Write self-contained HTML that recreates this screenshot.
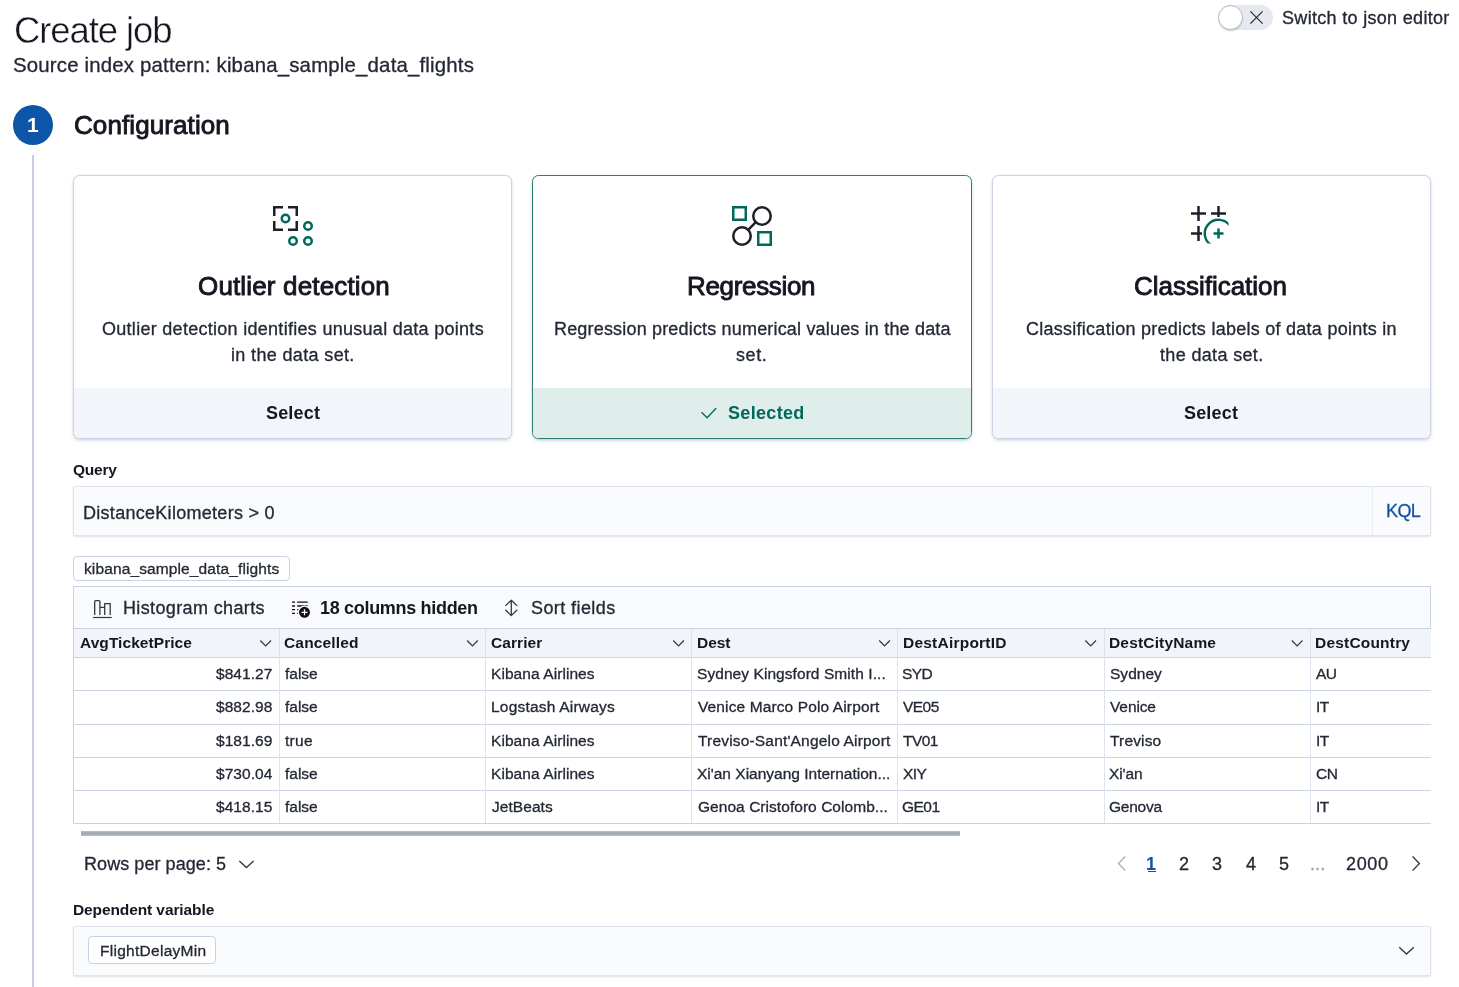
<!DOCTYPE html>
<html lang="en"><head><meta charset="utf-8"><title>Create job</title>
<style>
html,body{margin:0;padding:0;background:#fff;}
body{width:1459px;height:987px;overflow:hidden;position:relative;font-family:"Liberation Sans", sans-serif;}
.t{position:absolute;white-space:nowrap;line-height:1;display:block;will-change:transform;}
.b{position:absolute;box-sizing:border-box;}
svg{position:absolute;overflow:visible;}
</style></head><body>
<!-- toggle -->
<div class="b" style="left:1218px;top:5px;width:55px;height:25px;border-radius:12.5px;background:#e7e9f0;"></div>
<div class="b" style="left:1217.5px;top:4.7px;width:25px;height:25px;border-radius:50%;background:#fff;border:1px solid #b2b7c1;box-shadow:0 2px 2px -1px rgba(60,70,90,.25);"></div>
<svg style="left:1250px;top:10.7px" width="13" height="13" viewBox="0 0 13 13"><path d="M0.4 0.4L12.6 12.6M12.6 0.4L0.4 12.6" stroke="#2b303b" stroke-width="1.3" fill="none"/></svg>
<!-- step -->
<div class="b" style="left:13px;top:105px;width:40px;height:40px;border-radius:50%;background:#0c55a8;"></div>
<div class="b" style="left:31.6px;top:155px;width:2.6px;height:840px;background:#c6cce1;"></div>
<!-- cards -->
<div class="b card" style="left:73px;top:175px;width:439px;height:264px;"><div class="ft"></div></div>
<div class="b card sel" style="left:532px;top:175px;width:440px;height:264px;"><div class="ft"></div></div>
<div class="b card" style="left:992px;top:175px;width:439px;height:264px;"><div class="ft"></div></div>
<style>
.card{border:1px solid #cdd3e5;border-radius:6.5px;background:#fff;overflow:hidden;box-shadow:0 1px 3px rgba(100,110,150,.22),0 3px 5px -2px rgba(100,110,150,.18);}
.card .ft{position:absolute;left:0;right:0;top:212px;bottom:0;background:#f2f5fa;}
.card.sel{border:1.5px solid #2b7c72;box-shadow:0 1px 3px rgba(0,80,70,.18),0 3px 5px -2px rgba(0,80,70,.15);}
.card.sel .ft{background:#dfeeeb;top:211.7px;}
</style>
<!-- icons -->
<svg style="left:273px;top:206px" width="40" height="40" viewBox="0 0 32 32" fill="none" stroke-width="2">
<path d="M1 8V1H8M12 1H19V8M19 12V19H12M8 19H1V12" stroke="#1d2029"/>
<g stroke="#01695c"><circle cx="10" cy="10" r="3"/><circle cx="28" cy="16" r="3"/><circle cx="16" cy="28" r="3"/><circle cx="28" cy="28" r="3"/></g></svg>
<svg style="left:732px;top:206px" width="40" height="40" viewBox="0 0 32 32" fill="none" stroke-width="2">
<g stroke="#01695c"><rect x="1" y="1" width="10" height="10"/><rect x="21" y="21" width="10" height="10"/></g>
<g stroke="#1d2029"><circle cx="24" cy="8" r="7"/><circle cx="8" cy="24" r="7"/><path d="M19.05 12.95L12.95 19.05"/></g></svg>
<svg style="left:1191px;top:206px" width="40" height="40" viewBox="0 0 32 32" fill="none" stroke-width="2">
<defs><clipPath id="cc"><rect x="0" y="0" width="30" height="30"/></clipPath></defs>
<g stroke="#1d2029"><path d="M0 6H12M6 0V12M16 6H28M22 0V8.7M0 22H8.8M6 16V28"/></g>
<g stroke="#01695c"><path d="M18 22H26M22 18V26"/><path clip-path="url(#cc)" d="M16.5 31.53A11 11 0 1 1 31.53 16.5"/></g></svg>
<!-- selected check -->
<svg style="left:700px;top:406px" width="18" height="14" viewBox="0 0 18 14"><path d="M1.5 6.3L7.1 11.8L16.1 2.3" stroke="#00695c" stroke-width="1.35" fill="none"/></svg>
<!-- query -->
<div class="b" style="left:73px;top:486px;width:1358px;height:50px;background:#fafbfd;border:1px solid #e0e4ef;border-radius:2px;box-shadow:0 1px 2px rgba(150,160,190,.3);"></div>
<div class="b" style="left:1372px;top:487px;width:1px;height:48px;background:#e9ecf3;"></div>
<!-- index badge -->
<div class="b" style="left:73px;top:556px;width:217px;height:25px;background:#fff;border:1px solid #cad3e2;border-radius:4px;"></div>
<!-- datagrid -->
<div class="b" style="left:73px;top:586px;width:1358px;height:43px;background:#f9fafd;border:1px solid #cad3e2;"></div>
<div class="b" style="left:73px;top:628px;width:1358px;height:30px;background:#f1f4fa;border-top:1px solid #cad3e2;border-bottom:1px solid #cad3e2;"></div>
<div class="b" style="left:73px;top:628px;width:1px;height:196px;background:#cad3e2;"></div>
<div class="b hl" style="top:690px"></div><div class="b hl" style="top:724px"></div><div class="b hl" style="top:757px"></div><div class="b hl" style="top:790px"></div><div class="b hl" style="top:823px"></div>
<div class="b vl" style="left:279px"></div><div class="b vl" style="left:485px"></div><div class="b vl" style="left:691px"></div><div class="b vl" style="left:897px"></div><div class="b vl" style="left:1104px"></div><div class="b vl" style="left:1310px"></div>
<style>
.hl{left:73px;width:1358px;height:1px;background:#cad3e2;}
.vl{top:629px;width:1px;height:194px;background:#dce2ee;}
.chev{width:11px;height:6px;}
</style>
<!-- combo -->
<div class="b" style="left:73px;top:926px;width:1358px;height:50px;background:#fafbfd;border:1px solid #e0e4ef;border-radius:2px;box-shadow:0 1px 2px rgba(150,160,190,.3);"></div>
<div class="b" style="left:88px;top:936px;width:128px;height:28px;background:#fff;border:1px solid #cad3e2;border-radius:4px;"></div>
<!-- toolbar icons -->
<svg style="left:0;top:0" width="1459" height="987" viewBox="0 0 1459 987" fill="none">
<g stroke="#343741" stroke-width="1.3" stroke-linejoin="round">
<path d="M94.7 615V601.7a1 1 0 0 1 1-1H98.9a1 1 0 0 1 1 1V615M99.9 607.3H104.7M104.7 615V603.6H110.2V615"/>
<path d="M93 617.5H111.7" stroke-width="1.2"/>
<path d="M511.3 600.4V615.4M505.4 605.9L511.3 600.2L517.2 605.9M505.4 609.7L511.3 615.6L517.2 609.7"/>
</g>
<g stroke="#111" stroke-width="1.3">
<path d="M292 602.2H295M297.2 602.2H307.7M292 606H295M297.2 606H307.7M292 609.7H295M297.2 609.7H300M292 613.4H295M297.2 613.4H300"/>
</g>
<circle cx="304.5" cy="612.3" r="6.1" fill="#111" stroke="#f9fafd" stroke-width="1.2"/>
<path d="M301.5 612.3H307.5M304.5 609.3V615.3" stroke="#fff" stroke-width="1.3"/>
<!-- header chevrons -->
<g stroke="#343741" stroke-width="1.2">
<path d="M260.3 640.5L265.65 645.9L271 640.5"/>
<path d="M467.1 640.5L472.45 645.9L477.8 640.5"/>
<path d="M673.2 640.5L678.55 645.9L683.9 640.5"/>
<path d="M879.2 640.5L884.55 645.9L889.9 640.5"/>
<path d="M1085.3 640.5L1090.65 645.9L1096 640.5"/>
<path d="M1291.8 640.5L1297.15 645.9L1302.5 640.5"/>
</g>
<!-- rows per page chevron, combo chevron -->
<g stroke="#343741" stroke-width="1.35">
<path d="M239.3 860.9L246.45 867.6L253.6 860.9"/>
<path d="M1399.2 947.2L1406.5 954L1413.8 947.2"/>
<path d="M1412.6 856.5L1419.4 863.55L1412.6 870.6"/>
</g>
<path d="M1125.3 856.5L1118.5 863.55L1125.3 870.6" stroke="#a6aebd" stroke-width="1.35"/>
<!-- pagination active underline -->
<path d="M1148 871.5H1156" stroke="#1152a6" stroke-width="1"/>
<!-- scrollbar -->
<rect x="81" y="831.2" width="879" height="4.6" fill="#a6acb4"/>
</svg>

<span class="t" style="left:13.75px;top:13.10px;font-size:36.5px;color:#14171f;letter-spacing:-1.105px;-webkit-text-stroke:0.45px #fff;">Create job</span>
<span class="t" style="left:13.22px;top:54.73px;font-size:20.4px;color:#232834;letter-spacing:0.183px;-webkit-text-stroke:0.3px #232834;">Source index pattern: kibana_sample_data_flights</span>
<span class="t" style="left:1282.47px;top:8.76px;font-size:18px;color:#232834;letter-spacing:0.314px;-webkit-text-stroke:0.3px #232834;">Switch to json editor</span>
<span class="t" style="left:27.11px;top:114.22px;font-size:21px;color:#fff;font-weight:700;">1</span>
<span class="t" style="left:73.80px;top:111.99px;font-size:26px;color:#14171f;letter-spacing:0.092px;-webkit-text-stroke:0.9px #14171f;">Configuration</span>
<span class="t" style="left:197.67px;top:272.99px;font-size:26px;color:#14171f;letter-spacing:0.153px;-webkit-text-stroke:0.9px #14171f;">Outlier detection</span>
<span class="t" style="left:687.24px;top:272.99px;font-size:26px;color:#14171f;letter-spacing:-0.328px;-webkit-text-stroke:0.9px #14171f;">Regression</span>
<span class="t" style="left:1134.30px;top:272.99px;font-size:26px;color:#14171f;letter-spacing:-0.013px;-webkit-text-stroke:0.9px #14171f;">Classification</span>
<span class="t" style="left:101.93px;top:319.76px;font-size:18px;color:#232834;letter-spacing:0.285px;-webkit-text-stroke:0.3px #232834;">Outlier detection identifies unusual data points</span>
<span class="t" style="left:231.00px;top:345.76px;font-size:18px;color:#232834;letter-spacing:0.351px;-webkit-text-stroke:0.3px #232834;">in the data set.</span>
<span class="t" style="left:553.50px;top:319.76px;font-size:18px;color:#232834;letter-spacing:0.177px;-webkit-text-stroke:0.3px #232834;">Regression predicts numerical values in the data</span>
<span class="t" style="left:736.24px;top:345.76px;font-size:18px;color:#232834;letter-spacing:0.620px;-webkit-text-stroke:0.3px #232834;">set.</span>
<span class="t" style="left:1025.52px;top:319.76px;font-size:18px;color:#232834;letter-spacing:0.263px;-webkit-text-stroke:0.3px #232834;">Classification predicts labels of data points in</span>
<span class="t" style="left:1160.00px;top:345.76px;font-size:18px;color:#232834;letter-spacing:0.344px;-webkit-text-stroke:0.3px #232834;">the data set.</span>
<span class="t" style="left:265.83px;top:403.76px;font-size:18px;color:#14171f;font-weight:700;letter-spacing:0.179px;">Select</span>
<span class="t" style="left:728.33px;top:403.76px;font-size:18px;color:#00695c;font-weight:700;letter-spacing:0.328px;">Selected</span>
<span class="t" style="left:1183.83px;top:403.76px;font-size:18px;color:#14171f;font-weight:700;letter-spacing:0.179px;">Select</span>
<span class="t" style="left:73.13px;top:461.88px;font-size:15.5px;color:#14171f;font-weight:700;letter-spacing:-0.239px;">Query</span>
<span class="t" style="left:82.50px;top:503.76px;font-size:18px;color:#232834;letter-spacing:0.286px;-webkit-text-stroke:0.3px #232834;">DistanceKilometers &gt; 0</span>
<span class="t" style="left:1385.62px;top:501.76px;font-size:18px;color:#1152a6;letter-spacing:-0.630px;-webkit-text-stroke:0.3px #1152a6;">KQL</span>
<span class="t" style="left:83.92px;top:560.88px;font-size:15.5px;color:#232834;letter-spacing:0.120px;-webkit-text-stroke:0.3px #232834;">kibana_sample_data_flights</span>
<span class="t" style="left:123.00px;top:598.76px;font-size:18px;color:#232834;letter-spacing:0.369px;-webkit-text-stroke:0.3px #232834;">Histogram charts</span>
<span class="t" style="left:319.50px;top:598.76px;font-size:18px;color:#14171f;font-weight:700;letter-spacing:-0.312px;">18 columns hidden</span>
<span class="t" style="left:531.47px;top:598.76px;font-size:18px;color:#232834;letter-spacing:0.417px;-webkit-text-stroke:0.3px #232834;">Sort fields</span>
<span class="t" style="left:79.63px;top:634.88px;font-size:15.5px;color:#14171f;font-weight:700;letter-spacing:0.057px;">AvgTicketPrice</span>
<span class="t" style="left:284.13px;top:634.88px;font-size:15.5px;color:#14171f;font-weight:700;letter-spacing:0.164px;">Cancelled</span>
<span class="t" style="left:491.13px;top:634.88px;font-size:15.5px;color:#14171f;font-weight:700;letter-spacing:0.071px;">Carrier</span>
<span class="t" style="left:697.00px;top:634.88px;font-size:15.5px;color:#14171f;font-weight:700;letter-spacing:-0.048px;">Dest</span>
<span class="t" style="left:902.50px;top:634.88px;font-size:15.5px;color:#14171f;font-weight:700;letter-spacing:0.223px;">DestAirportID</span>
<span class="t" style="left:1108.50px;top:634.88px;font-size:15.5px;color:#14171f;font-weight:700;letter-spacing:0.169px;">DestCityName</span>
<span class="t" style="left:1315.00px;top:634.88px;font-size:15.5px;color:#14171f;font-weight:700;letter-spacing:0.197px;">DestCountry</span>
<span class="t" style="left:216.00px;top:665.88px;font-size:15.5px;color:#232834;letter-spacing:0.067px;-webkit-text-stroke:0.3px #232834;">$841.27</span>
<span class="t" style="left:216.00px;top:698.88px;font-size:15.5px;color:#232834;letter-spacing:0.067px;-webkit-text-stroke:0.3px #232834;">$882.98</span>
<span class="t" style="left:216.00px;top:732.88px;font-size:15.5px;color:#232834;letter-spacing:0.067px;-webkit-text-stroke:0.3px #232834;">$181.69</span>
<span class="t" style="left:216.00px;top:765.88px;font-size:15.5px;color:#232834;letter-spacing:0.056px;-webkit-text-stroke:0.3px #232834;">$730.04</span>
<span class="t" style="left:216.00px;top:798.88px;font-size:15.5px;color:#232834;letter-spacing:0.067px;-webkit-text-stroke:0.3px #232834;">$418.15</span>
<span class="t" style="left:285.00px;top:665.88px;font-size:15.5px;color:#232834;letter-spacing:-0.012px;-webkit-text-stroke:0.3px #232834;">false</span>
<span class="t" style="left:285.00px;top:698.88px;font-size:15.5px;color:#232834;letter-spacing:-0.012px;-webkit-text-stroke:0.3px #232834;">false</span>
<span class="t" style="left:285.00px;top:732.88px;font-size:15.5px;color:#232834;letter-spacing:0.281px;-webkit-text-stroke:0.3px #232834;">true</span>
<span class="t" style="left:285.00px;top:765.88px;font-size:15.5px;color:#232834;letter-spacing:-0.012px;-webkit-text-stroke:0.3px #232834;">false</span>
<span class="t" style="left:285.00px;top:798.88px;font-size:15.5px;color:#232834;letter-spacing:-0.012px;-webkit-text-stroke:0.3px #232834;">false</span>
<span class="t" style="left:491.00px;top:665.88px;font-size:15.5px;color:#232834;letter-spacing:0.073px;-webkit-text-stroke:0.3px #232834;">Kibana Airlines</span>
<span class="t" style="left:491.00px;top:698.88px;font-size:15.5px;color:#232834;letter-spacing:0.212px;-webkit-text-stroke:0.3px #232834;">Logstash Airways</span>
<span class="t" style="left:491.00px;top:732.88px;font-size:15.5px;color:#232834;letter-spacing:0.073px;-webkit-text-stroke:0.3px #232834;">Kibana Airlines</span>
<span class="t" style="left:491.00px;top:765.88px;font-size:15.5px;color:#232834;letter-spacing:0.073px;-webkit-text-stroke:0.3px #232834;">Kibana Airlines</span>
<span class="t" style="left:492.00px;top:798.88px;font-size:15.5px;color:#232834;letter-spacing:0.053px;-webkit-text-stroke:0.3px #232834;">JetBeats</span>
<span class="t" style="left:697.07px;top:665.88px;font-size:15.5px;color:#232834;letter-spacing:0.067px;-webkit-text-stroke:0.3px #232834;">Sydney Kingsford Smith I...</span>
<span class="t" style="left:698.11px;top:698.88px;font-size:15.5px;color:#232834;letter-spacing:0.120px;-webkit-text-stroke:0.3px #232834;">Venice Marco Polo Airport</span>
<span class="t" style="left:698.00px;top:732.88px;font-size:15.5px;color:#232834;letter-spacing:0.181px;-webkit-text-stroke:0.3px #232834;">Treviso-Sant'Angelo Airport</span>
<span class="t" style="left:696.96px;top:765.88px;font-size:15.5px;color:#232834;-webkit-text-stroke:0.3px #232834;">Xi'an Xianyang Internation...</span>
<span class="t" style="left:697.62px;top:798.88px;font-size:15.5px;color:#232834;letter-spacing:0.047px;-webkit-text-stroke:0.3px #232834;">Genoa Cristoforo Colomb...</span>
<span class="t" style="left:902.23px;top:665.88px;font-size:15.5px;color:#232834;letter-spacing:-0.543px;-webkit-text-stroke:0.3px #232834;">SYD</span>
<span class="t" style="left:903.25px;top:698.88px;font-size:15.5px;color:#232834;letter-spacing:-0.543px;-webkit-text-stroke:0.3px #232834;">VE05</span>
<span class="t" style="left:903.21px;top:732.88px;font-size:15.5px;color:#232834;letter-spacing:-0.543px;-webkit-text-stroke:0.3px #232834;">TV01</span>
<span class="t" style="left:903.08px;top:765.88px;font-size:15.5px;color:#232834;letter-spacing:-0.543px;-webkit-text-stroke:0.3px #232834;">XIY</span>
<span class="t" style="left:902.22px;top:798.88px;font-size:15.5px;color:#232834;letter-spacing:-0.543px;-webkit-text-stroke:0.3px #232834;">GE01</span>
<span class="t" style="left:1109.57px;top:665.88px;font-size:15.5px;color:#232834;letter-spacing:0.024px;-webkit-text-stroke:0.3px #232834;">Sydney</span>
<span class="t" style="left:1109.61px;top:698.88px;font-size:15.5px;color:#232834;letter-spacing:-0.110px;-webkit-text-stroke:0.3px #232834;">Venice</span>
<span class="t" style="left:1109.50px;top:732.88px;font-size:15.5px;color:#232834;letter-spacing:0.162px;-webkit-text-stroke:0.3px #232834;">Treviso</span>
<span class="t" style="left:1109.46px;top:765.88px;font-size:15.5px;color:#232834;letter-spacing:-0.096px;-webkit-text-stroke:0.3px #232834;">Xi'an</span>
<span class="t" style="left:1109.12px;top:798.88px;font-size:15.5px;color:#232834;letter-spacing:-0.232px;-webkit-text-stroke:0.3px #232834;">Genova</span>
<span class="t" style="left:1316.16px;top:665.88px;font-size:15.5px;color:#232834;letter-spacing:-0.543px;-webkit-text-stroke:0.3px #232834;">AU</span>
<span class="t" style="left:1315.57px;top:698.88px;font-size:15.5px;color:#232834;letter-spacing:-0.543px;-webkit-text-stroke:0.3px #232834;">IT</span>
<span class="t" style="left:1315.57px;top:732.88px;font-size:15.5px;color:#232834;letter-spacing:-0.543px;-webkit-text-stroke:0.3px #232834;">IT</span>
<span class="t" style="left:1315.66px;top:765.88px;font-size:15.5px;color:#232834;letter-spacing:-0.412px;-webkit-text-stroke:0.3px #232834;">CN</span>
<span class="t" style="left:1315.57px;top:798.88px;font-size:15.5px;color:#232834;letter-spacing:-0.543px;-webkit-text-stroke:0.3px #232834;">IT</span>
<span class="t" style="left:84.00px;top:854.76px;font-size:18px;color:#232834;letter-spacing:0.065px;-webkit-text-stroke:0.3px #232834;">Rows per page: 5</span>
<span class="t" style="left:1145.90px;top:854.76px;font-size:18px;color:#1152a6;font-weight:700;">1</span>
<span class="t" style="left:1179.25px;top:854.76px;font-size:18px;color:#232834;-webkit-text-stroke:0.3px #232834;">2</span>
<span class="t" style="left:1211.81px;top:854.76px;font-size:18px;color:#232834;-webkit-text-stroke:0.3px #232834;">3</span>
<span class="t" style="left:1246.10px;top:854.76px;font-size:18px;color:#232834;-webkit-text-stroke:0.3px #232834;">4</span>
<span class="t" style="left:1278.60px;top:854.76px;font-size:18px;color:#232834;-webkit-text-stroke:0.3px #232834;">5</span>
<span class="t" style="left:1309.50px;top:854.76px;font-size:18px;color:#98a2b3;letter-spacing:0.098px;-webkit-text-stroke:0.3px #98a2b3;">...</span>
<span class="t" style="left:1346.24px;top:854.76px;font-size:18px;color:#232834;letter-spacing:0.654px;-webkit-text-stroke:0.3px #232834;">2000</span>
<span class="t" style="left:73.00px;top:901.88px;font-size:15.5px;color:#14171f;font-weight:700;letter-spacing:-0.102px;">Dependent variable</span>
<span class="t" style="left:99.50px;top:942.88px;font-size:15.5px;color:#232834;letter-spacing:0.276px;-webkit-text-stroke:0.3px #232834;">FlightDelayMin</span>
</body></html>
